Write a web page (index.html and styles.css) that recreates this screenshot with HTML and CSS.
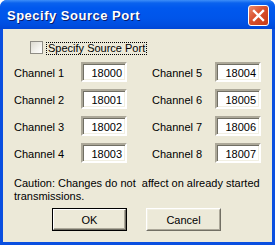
FILE: index.html
```html
<!DOCTYPE html>
<html>
<head>
<meta charset="utf-8">
<link rel="stylesheet" href="styles.css">
</head>
<body>
<div class="window">
  <div class="titlebar">
    <span class="title">Specify Source Port</span>
    <div class="close">
      <svg width="13" height="13" viewBox="0 0 13 13"><path d="M2 2 L11 11 M11 2 L2 11" stroke="#fff" stroke-width="2.4" stroke-linecap="square"/></svg>
    </div>
  </div>
  <div class="client">
    <div class="check-row">
      <span class="checkbox"></span>
      <span class="check-label">Specify Source Port</span>
    </div>
    <div class="grid">
      <span class="lbl">Channel 1</span><span class="edit">18000</span>
      <span class="lbl lbl2">Channel 5</span><span class="edit">18004</span>
      <span class="lbl">Channel 2</span><span class="edit">18001</span>
      <span class="lbl lbl2">Channel 6</span><span class="edit">18005</span>
      <span class="lbl">Channel 3</span><span class="edit">18002</span>
      <span class="lbl lbl2">Channel 7</span><span class="edit">18006</span>
      <span class="lbl">Channel 4</span><span class="edit">18003</span>
      <span class="lbl lbl2">Channel 8</span><span class="edit">18007</span>
    </div>
    <p class="caution">Caution: Changes do not&nbsp; affect on already started transmissions.</p>
    <div class="buttons">
      <span class="btn default"><span class="face">OK</span></span>
      <span class="btn"><span class="face">Cancel</span></span>
    </div>
  </div>
</div>
</body>
</html>
```
FILE: styles.css
```css
html, body {
  margin: 0;
  padding: 0;
  background: #ffffff;
}
body {
  width: 275px;
  height: 245px;
  overflow: hidden;
  font-family: "Liberation Sans", Arial, sans-serif;
  font-size: 11px;
  color: #000;
}
.window {
  width: 275px;
  height: 245px;
  box-sizing: border-box;
  display: flex;
  flex-direction: column;
  background: #0a4fe0;
  border-radius: 7px 7px 0 0;
  overflow: hidden;
}
.titlebar {
  height: 29px;
  flex: none;
  display: flex;
  align-items: center;
  justify-content: space-between;
  padding: 0 6px 0 7px;
  background: linear-gradient(#3d8ef8 0, #0a62ee 3px, #0058ee 8px, #0055ea 18px, #004ee0 25px, #0046d6 29px);
}
.title {
  color: #fff;
  font-family: "Liberation Sans", Arial, sans-serif;
  font-weight: bold;
  font-size: 13px;
  letter-spacing: 0.5px;
  text-shadow: 1px 1px 0 #0a1a6a;
  margin-top: 1px;
}
.close {
  width: 19px;
  height: 19px;
  border: 1px solid #fff;
  border-radius: 3px;
  background: linear-gradient(135deg, #eb8a6c 0%, #d9502c 45%, #c63a16 100%);
  display: flex;
  align-items: center;
  justify-content: center;
  margin-top: 2px;
}
.client {
  flex: 1;
  margin: 0 3px 3px 3px;
  background: #ece9d8;
  padding: 12px 11px 0 11px;
  box-sizing: border-box;
}
.check-row {
  display: flex;
  align-items: center;
  height: 13px;
  padding-left: 16px;
}
.checkbox {
  width: 11px;
  height: 11px;
  border: 1px solid #8f8d85;
  background: linear-gradient(135deg, #dcdad0 0%, #f4f3ee 60%, #ffffff 100%);
  flex: none;
}
.check-label {
  margin-left: 3px;
  padding: 0 1px;
  line-height: 11px;
  height: 11px;
  margin-top: 2px;
  border: 1px dotted #000;
}
.grid {
  display: grid;
  grid-template-columns: 67px 46px 25px 63px 46px;
  grid-auto-rows: 20px;
  row-gap: 7px;
  margin-top: 8px;
  align-items: center;
}
.lbl {
  grid-column: 1;
  padding-top: 2px;
}
.lbl2 {
  grid-column: 4;
}
.edit {
  height: 20px;
  box-sizing: border-box;
  background: #fff;
  border-style: solid;
  border-width: 2px;
  border-color: #aca899 #ffffff #ffffff #aca899;
  box-shadow: inset 1px 1px 0 #716f64, inset -1px -1px 0 #f1efe2;
  text-align: right;
  padding: 2px 3px 0 0;
  line-height: 14px;
}
.caution {
  margin: 14px 0 0 0;
  line-height: 13px;
  width: 250px;
}
.buttons {
  display: flex;
  gap: 19px;
  padding-left: 38px;
  margin-top: 5px;
}
.btn {
  width: 75px;
  height: 23px;
  box-sizing: border-box;
  display: flex;
  border-style: solid;
  border-width: 1px;
  border-color: #fff #716f64 #716f64 #fff;
  background: #ece9d8;
}
.btn .face {
  flex: 1;
  display: flex;
  align-items: center;
  justify-content: center;
  border-style: solid;
  border-width: 1px;
  border-color: #f1efe2 #aca899 #aca899 #f1efe2;
}
.btn.default {
  border: 1px solid #000;
}
.btn.default .face {
  border-color: #fff #716f64 #716f64 #fff;
  box-shadow: inset -1px -1px 0 #aca899;
}
```
